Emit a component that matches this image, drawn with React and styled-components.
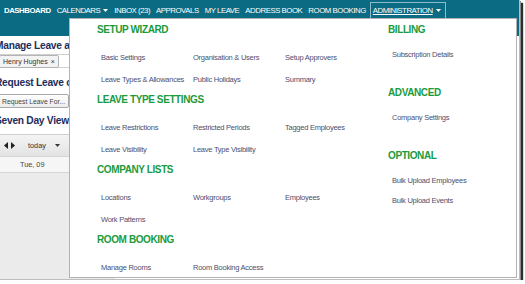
import React from "react";
import styled, { createGlobalStyle } from "styled-components";

const GlobalStyle = createGlobalStyle`
  html, body {
    margin: 0;
    padding: 0;
    background: #fff;
  }
  body {
    font-family: "Liberation Sans", Arial, sans-serif;
  }
`;

const Caret = ({ color = "#fff" }) => (
  <svg width="5" height="3" viewBox="0 0 5 3">
    <path d="M0 0h5L2.5 3z" fill={color} />
  </svg>
);

const Frame = styled.div`
  position: relative;
  width: 520px;
  height: 280px;
  box-sizing: border-box;
  border-right: 1px solid #bdbdbd;
  border-bottom: 1px solid #bdbdbd;
  box-shadow: 1px 1px 0 #8a8a8a, 3px 3px 1px #2e2e2e;
  overflow: hidden;
  background: #fff;
  display: flex;
  flex-direction: column;
`;

const TopBar = styled.nav`
  height: 36px;
  flex: none;
  box-sizing: border-box;
  padding: 2px 0 0 1px;
  background: #0a6b83;
  display: flex;
  align-items: flex-start;
`;

const NavItem = styled.a`
  display: flex;
  align-items: center;
  gap: 3px;
  height: 15px;
  padding: ${(p) => (p.$active ? "0 4px 0 2px" : "0 2px")};
  margin-left: ${(p) => (p.$active ? "1px" : "0")};
  color: #fff;
  font-size: 7.8px;
  letter-spacing: -0.45px;
  font-weight: ${(p) => (p.$bold ? 700 : 400)};
  text-decoration: none;
  border: 1px solid ${(p) => (p.$active ? "#8cbccb" : "transparent")};
  white-space: nowrap;

  span {
    text-decoration: ${(p) => (p.$active ? "underline" : "none")};
  }
`;

const Body = styled.div`
  flex: 1;
  min-height: 0;
  display: flex;
`;

const Side = styled.div`
  width: 120px;
  margin-left: -5px;
  padding-top: 3px;
  display: flex;
  flex-direction: column;
  white-space: nowrap;
`;

const PageTitle = styled.h2`
  margin: ${(p) => p.$top || 0}px 0 0;
  font-size: 10.2px;
  letter-spacing: -0.25px;
  line-height: 13px;
  font-weight: 700;
  color: #1d2d5c;
`;

const TokenInput = styled.div`
  margin-top: 2px;
  height: 14px;
  display: flex;
  align-items: center;
  border: 1px solid #d0d0d0;
  box-sizing: border-box;
  padding-left: 3px;
`;

const Token = styled.span`
  display: inline-flex;
  align-items: center;
  gap: 3px;
  height: 11px;
  padding: 0 3px;
  border: 1px solid #b4b4b4;
  border-radius: 2px;
  background: #f3f3f3;
  font-size: 7px;
  color: #333;
`;

const Button = styled.button`
  margin-top: 5px;
  margin-left: 3px;
  align-self: flex-start;
  height: 14px;
  padding: 0 3px;
  border: 1px solid #a9a9a9;
  border-radius: 2px;
  background: linear-gradient(#fff, #ececec);
  font-family: inherit;
  font-size: 6.8px;
  color: #444;
`;

const Calendar = styled.div`
  margin-top: 7px;
  flex: 1;
  display: flex;
  flex-direction: column;
  border-top: 1px solid #cfcfcf;
`;

const CalToolbar = styled.div`
  height: 21px;
  display: flex;
  align-items: center;
  padding-left: 9px;
  background: linear-gradient(#f4f4f4, #e3e3e3);
  font-size: 7.3px;
  color: #333;
`;

const Arrows = styled.span`
  display: flex;
  gap: 3px;
  margin-right: 13px;
`;

const Today = styled.span`
  display: flex;
  align-items: center;
  gap: 9px;
`;

const CalHeader = styled.div`
  height: 15px;
  display: flex;
  align-items: center;
  padding-left: 25px;
  background: #f6f6f6;
  border-top: 1px solid #d6d6d6;
  border-bottom: 1px solid #d6d6d6;
  font-size: 7.3px;
  color: #444;
`;

const CalBody = styled.div`
  flex: 1;
  background: #ebebeb;
`;

const Dropdown = styled.div`
  position: absolute;
  left: 69px;
  top: 18px;
  width: 448px;
  height: 260px;
  box-sizing: border-box;
  border: 1px solid #b3b3b3;
  background: #fff;
  display: flex;
  padding-left: 27px;
`;

const Pane = styled.div`
  width: ${(p) => p.$width || "auto"};
  flex: ${(p) => (p.$width ? "none" : 1)};
`;

const Section = styled.section`
  height: ${(p) => p.$h}px;
`;

const Heading = styled.h3`
  margin: 0;
  padding-top: 3px;
  line-height: 16px;
  font-size: 10px;
  letter-spacing: -0.4px;
  font-weight: 700;
  color: #1a9b3c;
`;

const LinkGrid = styled.div`
  display: grid;
  grid-template-columns: ${(p) => p.$cols};
  grid-auto-rows: ${(p) => p.$row}px;
  margin-top: ${(p) => p.$gap}px;
  padding-left: 4px;
`;

const MenuLink = styled.a`
  display: flex;
  align-items: center;
  font-size: 7.5px;
  letter-spacing: -0.25px;
  color: #4d4f6e;
  white-space: nowrap;
`;

const nav = [
  { label: "DASHBOARD", bold: true },
  { label: "CALENDARS", caret: true },
  { label: "INBOX (23)" },
  { label: "APPROVALS" },
  { label: "MY LEAVE" },
  { label: "ADDRESS BOOK" },
  { label: "ROOM BOOKING" },
  { label: "ADMINISTRATION", caret: true, active: true },
];

const leftSections = [
  {
    title: "SETUP WIZARD",
    links: [
      "Basic Settings",
      "Organisation & Users",
      "Setup Approvers",
      "Leave Types & Allowances",
      "Public Holidays",
      "Summary",
    ],
  },
  {
    title: "LEAVE TYPE SETTINGS",
    links: [
      "Leave Restrictions",
      "Restricted Periods",
      "Tagged Employees",
      "Leave Visibility",
      "Leave Type Visibility",
    ],
  },
  {
    title: "COMPANY LISTS",
    links: ["Locations", "Workgroups", "Employees", "Work Patterns"],
  },
  {
    title: "ROOM BOOKING",
    links: ["Manage Rooms", "Room Booking Access"],
  },
];

const rightSections = [
  { title: "BILLING", links: ["Subscription Details"] },
  { title: "ADVANCED", links: ["Company Settings"] },
  { title: "OPTIONAL", links: ["Bulk Upload Employees", "Bulk Upload Events"] },
];

export default function App() {
  return (
    <>
      <GlobalStyle />
      <Frame>
        <TopBar>
          {nav.map((n) => (
            <NavItem key={n.label} $bold={n.bold} $active={n.active}>
              <span>{n.label}</span>
              {n.caret && <Caret />}
            </NavItem>
          ))}
        </TopBar>

        <Body>
          <Side>
            <PageTitle>Manage Leave and Events</PageTitle>
            <TokenInput>
              <Token>
                Henry Hughes <span>×</span>
              </Token>
            </TokenInput>
            <PageTitle $top={8}>Request Leave or Event</PageTitle>
            <Button>Request Leave For...</Button>
            <PageTitle $top={6}>Seven Day View</PageTitle>
            <Calendar>
              <CalToolbar>
                <Arrows>
                  <svg width="4" height="7" viewBox="0 0 4 7">
                    <path d="M4 0v7L0 3.5z" fill="#222" />
                  </svg>
                  <svg width="4" height="7" viewBox="0 0 4 7">
                    <path d="M0 0v7l4-3.5z" fill="#222" />
                  </svg>
                </Arrows>
                <Today>
                  today <Caret color="#333" />
                </Today>
              </CalToolbar>
              <CalHeader>Tue, 09</CalHeader>
              <CalBody />
            </Calendar>
          </Side>
        </Body>

        <Dropdown>
          <Pane $width="291px">
            {leftSections.map((s) => (
              <Section key={s.title} $h={70}>
                <Heading>{s.title}</Heading>
                <LinkGrid $cols="92px 92px 1fr" $row={22} $gap={8}>
                  {s.links.map((l) => (
                    <MenuLink key={l}>{l}</MenuLink>
                  ))}
                </LinkGrid>
              </Section>
            ))}
          </Pane>
          <Pane>
            {rightSections.map((s) => (
              <Section key={s.title} $h={63}>
                <Heading>{s.title}</Heading>
                <LinkGrid $cols="1fr" $row={20} $gap={6}>
                  {s.links.map((l) => (
                    <MenuLink key={l}>{l}</MenuLink>
                  ))}
                </LinkGrid>
              </Section>
            ))}
          </Pane>
        </Dropdown>
      </Frame>
    </>
  );
}
